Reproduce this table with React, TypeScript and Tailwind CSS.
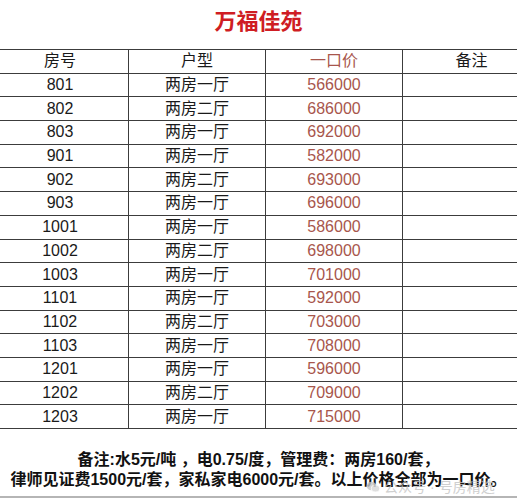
import React from "react";

const rows: [string, string, string][] = [
  ["801", "两房一厅", "566000"],
  ["802", "两房二厅", "686000"],
  ["803", "两房一厅", "692000"],
  ["901", "两房一厅", "582000"],
  ["902", "两房二厅", "693000"],
  ["903", "两房一厅", "696000"],
  ["1001", "两房一厅", "586000"],
  ["1002", "两房二厅", "698000"],
  ["1003", "两房一厅", "701000"],
  ["1101", "两房一厅", "592000"],
  ["1102", "两房二厅", "703000"],
  ["1103", "两房一厅", "708000"],
  ["1201", "两房一厅", "596000"],
  ["1202", "两房二厅", "709000"],
  ["1203", "两房一厅", "715000"],
];

const font = { fontFamily: '"Liberation Sans", "Noto Sans CJK SC", sans-serif' };

function Row({ a, b, c, d }: { a: string; b: string; c: string; d: string }) {
  return (
    <div className="grid grid-cols-[137px_137px_137px_137px] h-[23.7px] border-b-[1.5px] border-[#3c3c3c] text-[16px] leading-none text-[#1a1a1a]">
      <div className="flex items-center justify-center border-r-[1.5px] border-[#3c3c3c]">{a}</div>
      <div className="flex items-center justify-center border-r-[1.5px] border-[#3c3c3c]">{b}</div>
      <div className="flex items-center justify-center border-r-[1.5px] border-[#3c3c3c] text-[#a8564c]">{c}</div>
      <div className="flex items-center justify-center">{d}</div>
    </div>
  );
}

export default function App() {
  return (
    <div className="relative w-[517px] h-[500px] bg-white overflow-hidden" style={font}>
      <div className="h-[49px] pt-[9px] text-center text-[22px] leading-[26px] font-bold text-[#cf1d23]">万福佳苑</div>
      <div className="w-[548px] -ml-[8px] border-t-[1.5px] border-[#3c3c3c]">
        <Row a="房号" b="户型" c="一口价" d="备注" />
        {rows.map((r) => (
          <Row key={r[0]} a={r[0]} b={r[1]} c={r[2]} d="" />
        ))}
      </div>
      <div className="mt-[21px] text-center text-[16px] leading-[20px] font-bold text-[#111]">
        <div>备注:水5元/吨 ，电0.75/度，管理费：两房160/套，</div>
        <div>律师见证费1500元/套，家私家电6000元/套。以上价格全部为一口价。</div>
      </div>
      <div className="absolute left-[366px] top-[480px] flex items-center gap-[4px] text-[14px] leading-none text-[#c4c4c4] opacity-80">
        <svg width="14" height="12" viewBox="0 0 14 12">
          <ellipse cx="5.5" cy="5" rx="5" ry="4.2" fill="#c8c8c8" />
          <ellipse cx="9.5" cy="7.5" rx="4.2" ry="3.5" fill="#d8d8d8" stroke="#fff" strokeWidth="0.8" />
        </svg>
        <span>公众号</span>
        <span>·</span>
        <span>号房精选</span>
      </div>
      <div className="absolute left-0 right-0 top-[496px] h-[1.5px] bg-[#b5b5b5]" />
    </div>
  );
}
